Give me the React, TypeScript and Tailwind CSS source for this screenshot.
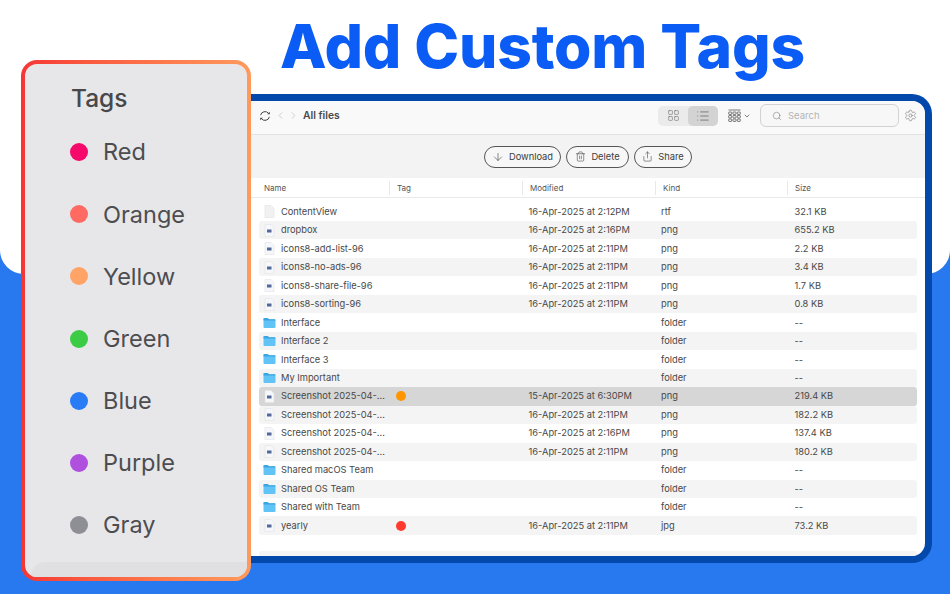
import { ArrowDown, ChevronLeft, ChevronRight, LayoutGrid, List, Search, Settings, Share, Trash2, ChevronDown } from "lucide-react";

type Row = { name: string; kind: "doc" | "img" | "folder"; tag?: string; date: string; type: string; size: string; selected?: boolean };

const TAGS = [
  { label: "Red", dot: "bg-[#f5096b]" },
  { label: "Orange", dot: "bg-[#ff6b63]" },
  { label: "Yellow", dot: "bg-[#ffa366]" },
  { label: "Green", dot: "bg-[#3ccb45]" },
  { label: "Blue", dot: "bg-[#2a7bf6]" },
  { label: "Purple", dot: "bg-[#b050de]" },
  { label: "Gray", dot: "bg-[#8e8e95]" },
];

const D1 = "16-Apr-2025 at 2:11PM";

const ROWS: Row[] = [
  { name: "ContentView", kind: "doc", date: "16-Apr-2025 at 2:12PM", type: "rtf", size: "32.1 KB" },
  { name: "dropbox", kind: "img", date: "16-Apr-2025 at 2:16PM", type: "png", size: "655.2 KB" },
  { name: "icons8-add-list-96", kind: "img", date: D1, type: "png", size: "2.2 KB" },
  { name: "icons8-no-ads-96", kind: "img", date: D1, type: "png", size: "3.4 KB" },
  { name: "icons8-share-file-96", kind: "img", date: D1, type: "png", size: "1.7 KB" },
  { name: "icons8-sorting-96", kind: "img", date: D1, type: "png", size: "0.8 KB" },
  { name: "Interface", kind: "folder", date: "", type: "folder", size: "--" },
  { name: "Interface 2", kind: "folder", date: "", type: "folder", size: "--" },
  { name: "Interface 3", kind: "folder", date: "", type: "folder", size: "--" },
  { name: "My Important", kind: "folder", date: "", type: "folder", size: "--" },
  { name: "Screenshot 2025-04-...", kind: "img", tag: "bg-[#ff9500]", date: "15-Apr-2025 at 6:30PM", type: "png", size: "219.4 KB", selected: true },
  { name: "Screenshot 2025-04-...", kind: "img", date: D1, type: "png", size: "182.2 KB" },
  { name: "Screenshot 2025-04-...", kind: "img", date: "16-Apr-2025 at 2:16PM", type: "png", size: "137.4 KB" },
  { name: "Screenshot 2025-04-...", kind: "img", date: D1, type: "png", size: "180.2 KB" },
  { name: "Shared macOS Team", kind: "folder", date: "", type: "folder", size: "--" },
  { name: "Shared OS Team", kind: "folder", date: "", type: "folder", size: "--" },
  { name: "Shared with Team", kind: "folder", date: "", type: "folder", size: "--" },
  { name: "yearly", kind: "img", tag: "bg-[#ff3b30]", date: D1, type: "jpg", size: "73.2 KB" },
];

const COLS = "grid grid-cols-[125px_133px_133px_132px_1fr]";

function FileIcon({ kind }: { kind: Row["kind"] }) {
  if (kind === "folder") {
    return (
      <svg width="13" height="12" viewBox="0 0 13 12" className="-ml-[1px] shrink-0">
        <path d="M0.5 2a1 1 0 0 1 1-1h3.2l1.2 1.2h5.6a1 1 0 0 1 1 1V10a1 1 0 0 1-1 1h-10a1 1 0 0 1-1-1z" fill="#62c3f7" />
        <path d="M0.5 2a1 1 0 0 1 1-1h3.2l1.2 1.2h5.6a1 1 0 0 1 1 1v.4h-12z" fill="#3ba6e6" />
      </svg>
    );
  }
  return (
    <svg width="13" height="13" viewBox="0 0 13 13" className="-ml-[1px] shrink-0">
      <path d="M2 0.5h6l3 3v9H2z" fill={kind === "doc" ? "#f1f1f1" : "#f6f7fa"} stroke="#e2e2e4" strokeWidth="0.6" />
      {kind === "img" && <rect x="4" y="5.5" width="4.5" height="3" fill="#51689a" />}
    </svg>
  );
}

function GroupIcon() {
  return (
    <svg width="13" height="13" viewBox="0 0 13 13" fill="none" stroke="#555" strokeWidth="0.8">
      <path d="M0.5 1h12" />
      {[0.7, 5, 9.3].map((x) =>
        [3, 6.5, 10].map((y) => <rect key={`${x}-${y}`} x={x} y={y} width="3" height="2.4" rx="0.5" />),
      )}
    </svg>
  );
}

function SyncIcon() {
  return (
    <svg width="12" height="12" viewBox="0 0 12 12" fill="none" stroke="#444" strokeWidth="1" className="shrink-0">
      <path d="M1.6 5.2A4.5 4.5 0 0 1 9.6 3.4" />
      <path d="M10.4 6.8A4.5 4.5 0 0 1 2.4 8.6" />
      <path d="M8.2 4.2h2.6V1.8z" fill="#444" stroke="none" />
      <path d="M3.8 7.8H1.2v2.4z" fill="#444" stroke="none" />
    </svg>
  );
}

function ActionButton({ icon, label, width }: { icon: React.ReactNode; label: string; width: string }) {
  return (
    <button className={`flex h-[22px] items-center justify-center gap-[5px] rounded-full border border-[#555] bg-[#f7f7f7] text-[9.3px] text-[#3c3c3c] ${width}`}>
      {icon}
      {label}
    </button>
  );
}

function Window() {
  return (
    <div className="flex h-[469px] w-[681px] flex-col overflow-hidden rounded-r-[20px] border-y-[7px] border-r-[7px] border-[#0349ab] bg-white">
      <div className="flex h-[34px] shrink-0 items-center border-b border-[#e3e3e3] bg-[#f9f9fa] pb-[4px] pl-[8px] pr-[8px]">
        <SyncIcon />
        <ChevronLeft size={11} strokeWidth={1.2} className="ml-[4px] text-[#aaa]" />
        <ChevronRight size={11} strokeWidth={1.2} className="ml-[2px] text-[#aaa]" />
        <span className="ml-[4px] text-[10.3px] font-semibold text-[#4a4a4a]">All files</span>
        <div className="ml-auto flex h-[20px] w-[60px] rounded-[5px] bg-[#ebebeb]">
          <div className="flex w-[30px] items-center justify-center">
            <LayoutGrid size={13} strokeWidth={1} className="text-[#666]" />
          </div>
          <div className="flex w-[30px] items-center justify-center rounded-[5px] bg-[#d3d3d3]">
            <List size={14} strokeWidth={1} className="text-[#444]" />
          </div>
        </div>
        <div className="ml-[10px] flex items-center">
          <GroupIcon />
          <ChevronDown size={8} strokeWidth={2} className="ml-[2px] text-[#444]" />
        </div>
        <div className="ml-[9px] flex h-[23px] w-[139px] items-center rounded-[6px] border border-[#d2d2d2] bg-[#f7f7f7] pl-[11px]">
          <Search size={10} strokeWidth={1.3} className="text-[#777]" />
          <span className="ml-[6px] pt-[1px] text-[9.5px] text-[#b4b4b4]">Search</span>
        </div>
        <Settings size={13} strokeWidth={1} className="ml-[5px] text-[#666]" />
      </div>
      <div className="flex h-[43px] shrink-0 items-center justify-center gap-[5px] bg-[#f3f3f3]">
        <ActionButton width="w-[77px]" icon={<ArrowDown size={12} strokeWidth={1.2} />} label="Download" />
        <ActionButton width="w-[63px]" icon={<Trash2 size={11} strokeWidth={1.2} />} label="Delete" />
        <ActionButton width="w-[58px]" icon={<Share size={11} strokeWidth={1.2} />} label="Share" />
      </div>
      <div className={`${COLS} h-[20px] shrink-0 items-center border-b border-[#eaeaea] pl-[13px] text-[8px] text-[#555]`}>
        {["Name", "Tag", "Modified", "Kind", "Size"].map((h, i) => (
          <div key={h} className={i === 0 ? "" : "flex h-[14px] items-center border-l border-[#e8e8e8] pl-[7px]"}>
            {h}
          </div>
        ))}
      </div>
      <div className="flex flex-1 flex-col px-[8px] pt-[4.5px]">
        {ROWS.map((r, i) => (
          <div
            key={`${r.name}-${i}`}
            className={`${COLS} h-[18.48px] shrink-0 items-center rounded-[3px] pl-[5px] text-[9.3px] text-[#484848] ${
              r.selected ? "bg-[#d6d6d6]" : i % 2 === 1 ? "bg-[#f4f4f4]" : ""
            }`}
          >
            <div className="flex items-center gap-[5px] whitespace-nowrap">
              <FileIcon kind={r.kind} />
              <span>{r.name}</span>
            </div>
            <div className="pl-[7px]">{r.tag && <div className={`h-[10px] w-[10px] rounded-full ${r.tag}`} />}</div>
            <div className="pl-[6.5px] whitespace-nowrap">{r.date}</div>
            <div className="pl-[6px]">{r.type}</div>
            <div className="pl-[7.5px]">{r.size}</div>
          </div>
        ))}
      </div>
      <div className="mx-[8px] h-[5px] shrink-0 rounded-t-[3px] bg-[#f4f4f4]" />
    </div>
  );
}

export default function App() {
  return (
    <div className="relative h-[594px] w-[950px] overflow-hidden bg-[#2878f0] font-['Inter','Liberation_Sans',sans-serif]">
      {/* white backdrop behind the top half */}
      <div className="absolute inset-x-0 top-0 h-[274px] rounded-b-[24px] bg-white" />
      <div className="relative flex pl-[21px]">
        <div className="relative z-10 mt-[60px] h-[521px] w-[230px] shrink-0 rounded-[16px] bg-gradient-to-r from-[#f53535] to-[#ff9a5c] p-[4px]">
          <div className="flex h-full flex-col overflow-hidden rounded-[12px] bg-[#e7e7ea]">
            <div className="pl-[46px] pt-[16px] text-[24.5px] font-medium leading-[36px] text-[#48484a]">Tags</div>
            <div className="mt-[5px] flex flex-col">
              {TAGS.map((t) => (
                <div key={t.label} className="flex h-[62.2px] items-center pl-[45px]">
                  <span className={`h-[18px] w-[18px] rounded-full ${t.dot}`} />
                  <span className="ml-[15px] text-[23.5px] leading-none text-[#4d4d50]">{t.label}</span>
                </div>
              ))}
            </div>
            <div className="mt-auto ml-[6px] h-[15px] rounded-tl-[14px] bg-[#e0e0e2]" />
          </div>
        </div>
        <div className="flex flex-col">
          <h1 className="h-[94px] whitespace-nowrap pr-[98px] pt-[8px] text-center text-[60.5px] font-extrabold leading-[76px] tracking-[-0.2px] text-[#0a5cf5]">
            Add Custom Tags
          </h1>
          <Window />
        </div>
      </div>
    </div>
  );
}
